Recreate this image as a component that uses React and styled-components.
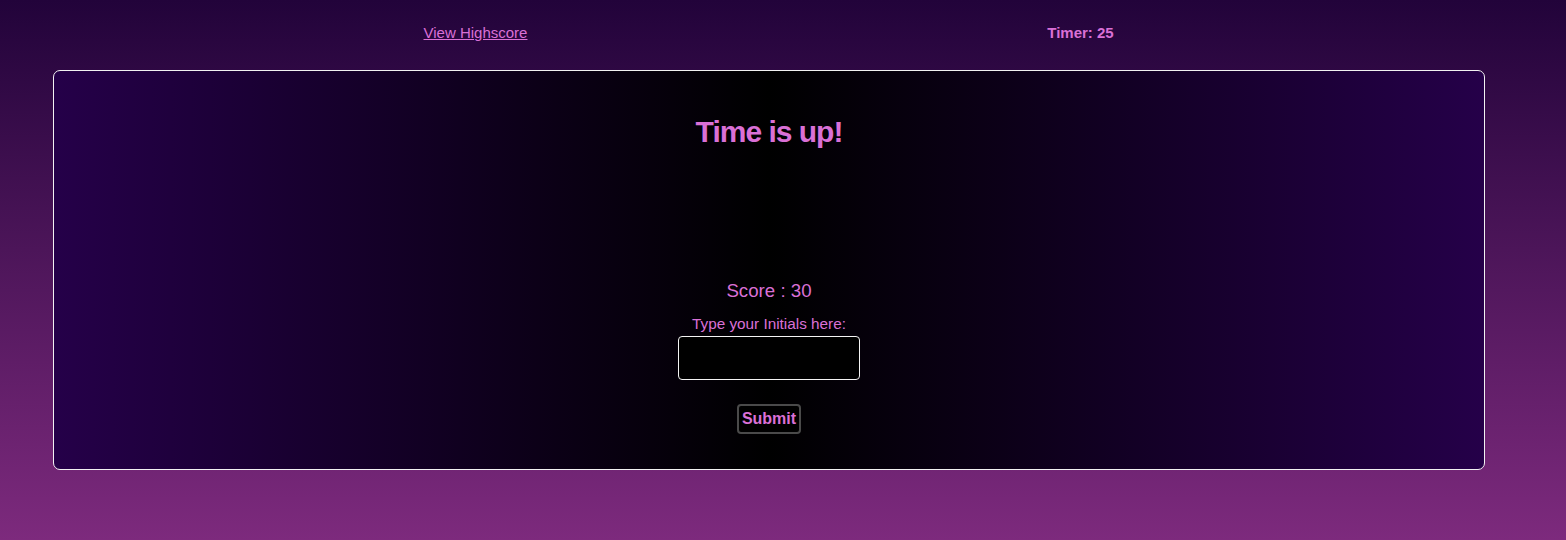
import React from "react";
import styled, { createGlobalStyle } from "styled-components";

const Global = createGlobalStyle`
  html, body { margin: 0; padding: 0; }
  body {
    min-height: 100vh;
    background: linear-gradient(to bottom, #22033a 0%, #7d2a7d 100%);
    font-family: "Liberation Sans", Arial, sans-serif;
    color: orchid;
  }
`;

const Page = styled.div`
  display: flex;
  flex-direction: column;
`;

const Header = styled.header`
  height: 64px;
  display: grid;
  grid-template-columns: 605px 605px;
  align-items: center;
  padding-left: 173px;
`;

const HeaderCell = styled.div`
  text-align: center;
  font-size: 15px;
  font-weight: ${(p) => (p.$bold ? "bold" : "normal")};
`;

const Link = styled.a`
  color: orchid;
  text-decoration: underline;
  cursor: pointer;
`;

const Card = styled.main`
  margin: 6px 0 0 53px;
  width: 1432px;
  box-sizing: border-box;
  border: 1px solid #f2f2f2;
  border-radius: 7px;
  background: linear-gradient(to right, #250049 0%, #000000 50%, #250049 100%);
  display: flex;
  flex-direction: column;
  align-items: center;
  padding: 44px 0 35px;
`;

const Title = styled.h1`
  margin: 0;
  font-size: 30px;
  letter-spacing: -1px;
  font-weight: bold;
`;

const Score = styled.p`
  margin: 131px 0 0;
  font-size: 18.7px;
`;

const Label = styled.label`
  margin-top: 13px;
  font-size: 15.3px;
`;

const Input = styled.input`
  margin-top: 3px;
  width: 182px;
  height: 44px;
  box-sizing: border-box;
  background: #000;
  border: 1px solid #f4f4f4;
  border-radius: 4px;
  color: orchid;
  caret-color: orchid;
  padding: 0 12px;
  font-size: 16px;
  font-family: "Liberation Sans", Arial, sans-serif;
  outline: none;
`;

const Button = styled.button`
  margin-top: 24px;
  width: 64px;
  height: 30px;
  box-sizing: border-box;
  background: #000;
  border: 2px solid #4a4a4a;
  border-radius: 4px;
  color: orchid;
  font-family: "Liberation Sans", Arial, sans-serif;
  font-size: 16px;
  font-weight: bold;
  padding: 0;
  cursor: pointer;
`;

export default function App() {
  return (
    <Page>
      <Global />
      <Header>
        <HeaderCell>
          <Link>View Highscore</Link>
        </HeaderCell>
        <HeaderCell $bold>Timer: 25</HeaderCell>
      </Header>
      <Card>
        <Title>Time is up!</Title>
        <Score>Score : 30</Score>
        <Label htmlFor="initials">Type your Initials here:</Label>
        <Input id="initials" autoFocus />
        <Button>Submit</Button>
      </Card>
    </Page>
  );
}
